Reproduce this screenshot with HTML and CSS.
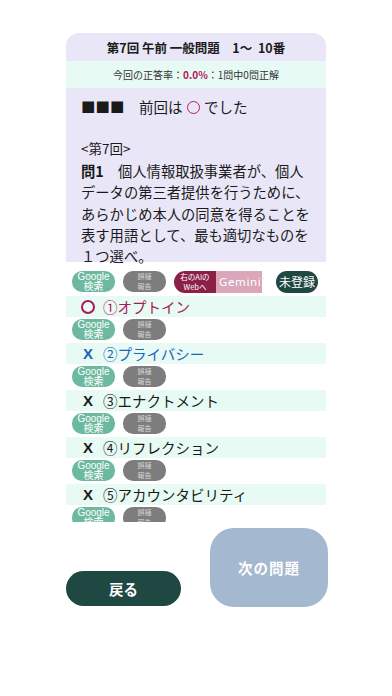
FILE: index.html
```html
<!DOCTYPE html>
<html lang="ja">
<head>
<meta charset="utf-8">
<link rel="stylesheet" href="styles.css">
</head>
<body>
<div class="page">
  <div class="card">
    <div class="hdr">第7回 午前 一般問題　1〜  10番</div>
    <div class="rate">今回の正答率：<b class="pct">0.0%</b>：1問中0問正解</div>
    <div class="content">
      <p class="prev">■■■　前回は <span class="ring"></span> でした</p>
      <p class="round">&lt;第7回&gt;</p>
      <p class="q"><b>問1</b>　個人情報取扱事業者が、個人データの第三者提供を行うために、あらかじめ本人の同意を得ることを表す用語として、最も適切なものを１つ選べ。</p>
    </div>
    <div class="ops">
      <div class="tools">
        <span class="gbtn">Google<br>検索</span>
        <span class="rbtn">誤植<br>報告</span>
        <span class="ai"><span class="aiL">右のAIの<br>Webへ</span><span class="aiR">Gemini<span class="dd">ˇ</span></span></span>
        <span class="reg">未登録</span>
      </div>
      <div class="opt c1"><span class="mk"><span class="ring big"></span></span>①オプトイン</div>
      <div class="tools"><span class="gbtn">Google<br>検索</span><span class="rbtn">誤植<br>報告</span></div>
      <div class="opt c2"><span class="mk x">X</span>②プライバシー</div>
      <div class="tools"><span class="gbtn">Google<br>検索</span><span class="rbtn">誤植<br>報告</span></div>
      <div class="opt"><span class="mk x">X</span>③エナクトメント</div>
      <div class="tools"><span class="gbtn">Google<br>検索</span><span class="rbtn">誤植<br>報告</span></div>
      <div class="opt"><span class="mk x">X</span>④リフレクション</div>
      <div class="tools"><span class="gbtn">Google<br>検索</span><span class="rbtn">誤植<br>報告</span></div>
      <div class="opt"><span class="mk x">X</span>⑤アカウンタビリティ</div>
      <div class="tools"><span class="gbtn">Google<br>検索</span><span class="rbtn">誤植<br>報告</span></div>
    </div>
  </div>
  <div class="bottom">
    <div class="back">戻る</div>
    <div class="next">次の問題</div>
  </div>
</div>
</body>
</html>
```

FILE: styles.css
```css
* { box-sizing: border-box; }
html, body { margin: 0; padding: 0; background: #ffffff; }
body {
  font-family: "Noto Sans CJK JP", "Noto Sans", sans-serif;
  color: #1a1a1a;
  width: 392px;
  height: 696px;
  overflow: hidden;
}
.page { padding: 33px 0 0 66px; }
.card { width: 260px; }
.hdr {
  height: 28px;
  background: #e9e7f7;
  border-radius: 13px 13px 0 0;
  display: flex; align-items: center; justify-content: center;
  font-size: 12.5px; font-weight: 700; color: #1c1c1c;
  white-space: pre;
}
.rate {
  height: 27px;
  background: #e7faf3;
  display: flex; align-items: center; justify-content: center;
  font-size: 10px; color: #333;
}
.pct { color: #b0195c; font-weight: 700; }
.content {
  background: #e9e7f7;
  height: 174px;
  padding: 6px 14px 0 15px;
}
.content p { margin: 0; }
.prev { font-size: 14.5px; line-height: 26px; }
.ring {
  display: inline-block;
  width: 13px; height: 13px;
  border: 1.6px solid #c0185e;
  border-radius: 50%;
  vertical-align: -1px;
  margin: 0 1px;
}
.ring.big { width: 14px; height: 14px; border-width: 2px; border-color: #a8185a; margin: 0; vertical-align: -2px; }
.round { font-size: 13.5px; line-height: 19px; margin-top: 19px !important; }
.q { font-size: 14.3px; line-height: 21.3px; margin-top: 2px !important; }
.q b { font-weight: 700; }
.ops {
  height: 260px;
  overflow: hidden;
  padding-top: 9px;
}
.tools {
  display: flex; align-items: center;
  height: 21px;
  margin: 2px 0 3px 6px;
  gap: 8px;
}
.ops > .tools:first-child { margin-top: 0; margin-bottom: 4px; }
.gbtn, .rbtn {
  width: 43px; height: 21px;
  border-radius: 10px;
  display: flex; align-items: center; justify-content: center;
  text-align: center;
  color: #fff;
  line-height: 9.5px;
}
.gbtn { background: #6cb99f; font-size: 10px; font-family: "Liberation Sans", "Noto Sans CJK JP", sans-serif; line-height: 10px; }
.rbtn { background: #7d7d7d; font-size: 7px; color: #d8d8d8; }
.ai { display: flex; height: 22px; }
.aiL {
  width: 42px; background: #8c1f46; color: #fff;
  font-size: 7.5px; line-height: 9.5px;
  border-radius: 11px 0 0 11px;
  display: flex; align-items: center; justify-content: center; text-align: center;
}
.aiR {
  width: 46px; background: #d9a7b9; color: #fff;
  font-size: 11.5px; letter-spacing: 0.6px;
  font-family: "Noto Sans", sans-serif;
  display: flex; align-items: center; padding-left: 3px;
}
.dd { font-size: 8px; color: #f4dbe4; }
.reg {
  margin-left: 6px;
  width: 42px; height: 22px;
  background: #1f4843; color: #fff;
  border-radius: 11px;
  font-size: 12px;
  display: flex; align-items: center; justify-content: center;
}
.opt {
  height: 21px;
  background: #e7faf3;
  font-size: 14.5px;
  line-height: 21px;
  padding-left: 15px;
  white-space: pre;
  display: flex; align-items: center;
}
.mk { display: inline-flex; align-items: center; width: 22px; padding-left: 2px; }
.c1 .mk { padding-left: 0; }
.c1 { color: #a8185a; }
.c2 { color: #1b64b8; }
.x { font-family: "Liberation Sans", sans-serif; font-weight: 700; font-size: 15px; }
.bottom {
  width: 262px;
  display: flex; align-items: flex-end; justify-content: space-between;
  margin-top: 6px;
}
.back {
  width: 115px; height: 35px;
  background: #1f4843; color: #fff;
  border-radius: 18px;
  display: flex; align-items: center; justify-content: center;
  font-size: 14.5px; font-weight: 700;
  margin-bottom: 1px;
}
.next {
  width: 118px; height: 79px;
  background: #a4b8cf; color: #fff;
  border-radius: 24px;
  display: flex; align-items: center; justify-content: center;
  font-size: 14.5px; font-weight: 700; letter-spacing: 1px;
}
```
